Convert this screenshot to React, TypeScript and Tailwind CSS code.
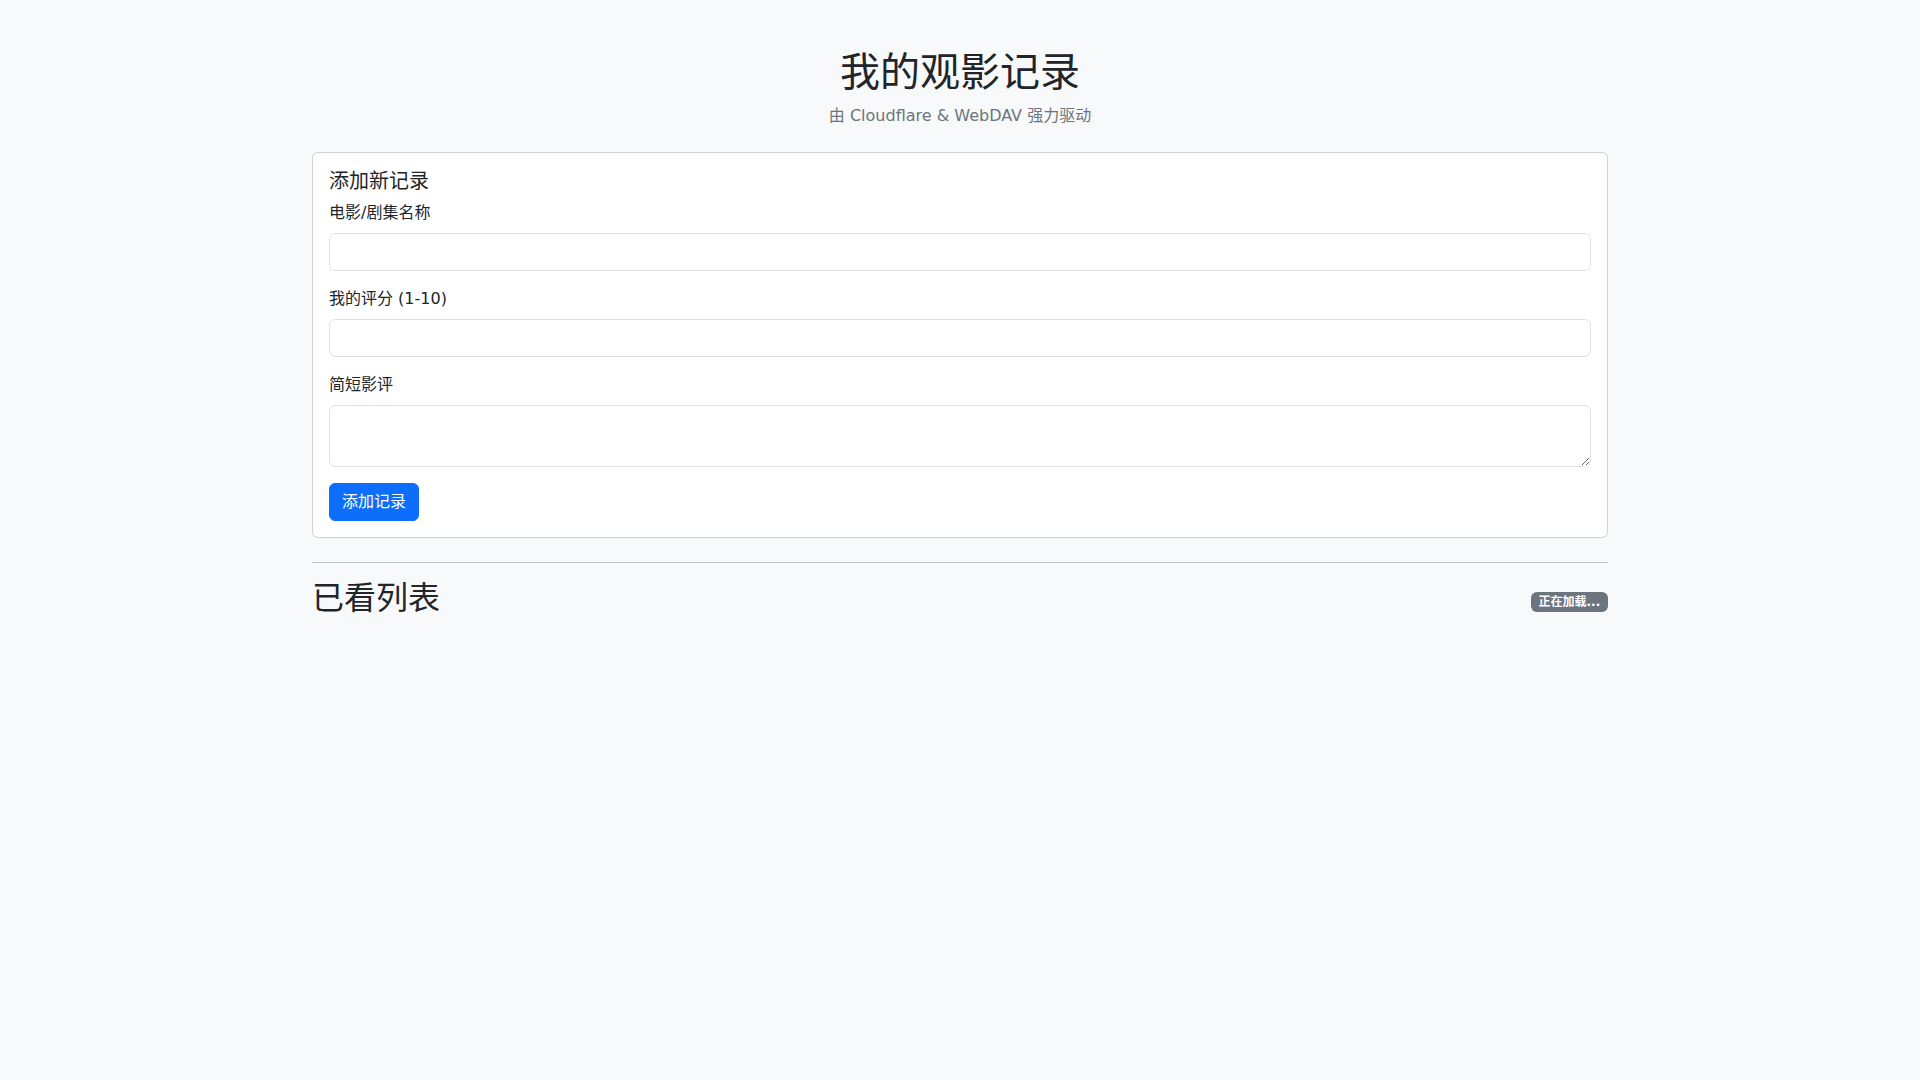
import React from "react";

export default function App() {
  return (
    <div
      className="min-h-screen bg-[#f8f9fa] text-[#212529] text-base leading-6"
      style={{ fontFamily: '"DejaVu Sans", "Noto Sans CJK SC", sans-serif' }}
    >
      <div className="mx-auto w-[1320px] px-3 pt-12">
        <div className="text-center mb-6">
          <h1 className="text-[40px] leading-[48px] font-normal mb-2">我的观影记录</h1>
          <p className="text-[#6c757d] leading-6">由 Cloudflare &amp; WebDAV 强力驱动</p>
        </div>

        <div className="bg-white border border-black/[.175] rounded-md p-4 mb-6">
          <h5 className="text-xl leading-6 font-normal mb-2">添加新记录</h5>
          <div className="mb-4">
            <label className="block mb-2 leading-6">电影/剧集名称</label>
            <input
              type="text"
              className="block w-full h-[38px] px-3 bg-white border border-[#dee2e6] rounded-md outline-none"
            />
          </div>
          <div className="mb-4">
            <label className="block mb-2 leading-6">我的评分 (1-10)</label>
            <input
              type="number"
              className="block w-full h-[38px] px-3 bg-white border border-[#dee2e6] rounded-md outline-none"
            />
          </div>
          <div className="mb-4">
            <label className="block mb-2 leading-6">简短影评</label>
            <textarea
              className="block w-full h-[62px] px-3 py-1.5 bg-white border border-[#dee2e6] rounded-md outline-none"
            />
          </div>
          <button className="h-[38px] px-3 bg-[#0d6efd] border border-[#0d6efd] text-white rounded-md leading-6">
            添加记录
          </button>
        </div>

        <hr className="border-0 border-t border-[#212529]/25 mb-4" />

        <div className="flex justify-between items-center">
          <h2 className="text-[32px] leading-[38.4px] font-normal mb-2">已看列表</h2>
          <span className="inline-block bg-[#6c757d] text-white text-[12px] font-bold leading-none px-[7.8px] py-[4.2px] rounded-md">
            正在加载...
          </span>
        </div>
      </div>
    </div>
  );
}
